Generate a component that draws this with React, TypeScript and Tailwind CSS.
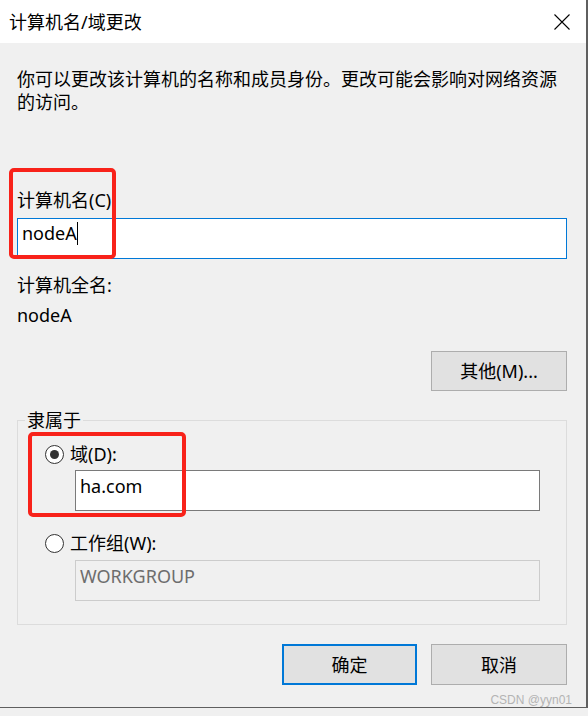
import React from "react";

function Radio({ checked }: { checked?: boolean }) {
  return (
    <span className="w-[19px] h-[19px] rounded-full border border-[#333333] bg-white flex items-center justify-center shrink-0">
      {checked && <span className="w-[9px] h-[9px] rounded-full bg-[#333333]" />}
    </span>
  );
}

export default function App() {
  return (
    <div className="w-[588px] h-[716px] bg-[#f0f0f0] text-black font-['Noto_Sans','Noto_Sans_CJK_SC',sans-serif]">
      <div className="relative h-[708px] border-r-2 border-b border-[#5f5f5f] flex flex-col">
        <div className="h-[43px] bg-white flex items-center justify-between pl-[9px] pr-[16px] shrink-0">
          <span className="text-[18px] leading-[24px]">计算机名/域更改</span>
          <svg width="16" height="16" viewBox="0 0 16 16">
            <path d="M0.5 0.5L15.5 15.5M15.5 0.5L0.5 15.5" stroke="#000" strokeWidth="1.1" fill="none" />
          </svg>
        </div>
        <div className="flex flex-col pl-[17px] pr-[19px] text-[18px]">
          <p className="mt-[25px] leading-[23px]">
            你可以更改该计算机的名称和成员身份。更改可能会影响对网络资源的访问。
          </p>
          <div className="mt-[74px] leading-[24px]">计算机名(C)</div>
          <div className="mt-[6px] h-[41px] bg-white border border-[#0078d7] pl-[4px] pt-[2px] leading-[24px] flex items-start">
            <span>nodeA</span>
            <span className="inline-block w-px h-[23px] bg-black mt-[1px]" />
          </div>
          <div className="mt-[14px] leading-[24px]">计算机全名:</div>
          <div className="mt-[6px] leading-[24px]">nodeA</div>
          <button className="self-end mt-[24px] w-[136px] h-[40px] bg-[#e1e1e1] border border-[#adadad] leading-[24px]">
            其他(M)...
          </button>
          <fieldset className="mt-[17px] border border-[#dcdcdc] px-0 pt-[10px] pb-[23px]">
            <legend className="ml-[7px] px-[2px] leading-[24px]">隶属于</legend>
            <div className="flex items-center ml-[27px] h-[24px] gap-[6px]">
              <Radio checked />
              <span className="leading-[24px]">域(D):</span>
            </div>
            <div className="mt-[4px] ml-[57px] w-[465px] h-[41px] bg-white border border-[#7a7a7a] pl-[4px] pt-[3px] leading-[24px]">
              ha.com
            </div>
            <div className="mt-[20px] flex items-center ml-[27px] h-[24px] gap-[6px]">
              <Radio />
              <span className="leading-[24px]">工作组(W):</span>
            </div>
            <div className="mt-[5px] ml-[57px] w-[465px] h-[41px] bg-[#f0f0f0] border border-[#cccccc] pl-[4px] pt-[3px] leading-[24px] text-[#6d6d6d]">
              WORKGROUP
            </div>
          </fieldset>
          <div className="mt-[19px] flex justify-end gap-[14px]">
            <button className="w-[135px] h-[41px] bg-[#e1e1e1] border-2 border-[#0078d7] leading-[24px]">确定</button>
            <button className="w-[136px] h-[41px] bg-[#e1e1e1] border border-[#adadad] leading-[24px]">取消</button>
          </div>
        </div>
        <div className="absolute left-[9px] top-[168px] w-[107px] h-[91px] border-4 border-[#f8221a] rounded-[5px]" />
        <div className="absolute left-[28px] top-[432px] w-[158px] h-[85px] border-4 border-[#f8221a] rounded-[5px]" />
        <div className="absolute right-[14px] top-[693px] text-[12px] leading-[14px] text-[#b4b4b4] font-['Liberation_Sans',sans-serif]">
          CSDN @yyn01
        </div>
      </div>
    </div>
  );
}
